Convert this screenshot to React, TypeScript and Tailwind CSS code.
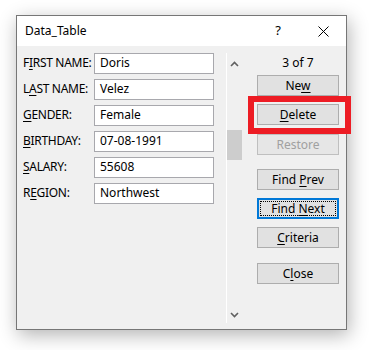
import React from 'react';

const font = { fontFamily: '"Noto Sans", "Liberation Sans", sans-serif' };

interface Field {
  pre: string;
  key: string;
  post: string;
  value: string;
}

const fields: Field[] = [
  { pre: 'F', key: 'I', post: 'RST NAME:', value: 'Doris' },
  { pre: 'L', key: 'A', post: 'ST NAME:', value: 'Velez' },
  { pre: '', key: 'G', post: 'ENDER:', value: 'Female' },
  { pre: '', key: 'B', post: 'IRTHDAY:', value: '07-08-1991' },
  { pre: '', key: 'S', post: 'ALARY:', value: '55608' },
  { pre: 'R', key: 'E', post: 'GION:', value: 'Northwest' },
];

const Btn: React.FC<{
  pre: string;
  k?: string;
  post?: string;
  className?: string;
  disabled?: boolean;
  focused?: boolean;
}> = ({ pre, k = '', post = '', className = '', disabled, focused }) => (
  <div
    className={`relative h-[21px] w-[82px] flex items-center justify-center text-[12px] ${
      focused
        ? 'border-2 border-[#0078d7] bg-[#e1e1e1]'
        : disabled
        ? 'border border-[#bfbfbf] bg-[#e6e6e6] text-[#a0a0a0]'
        : 'border border-[#adadad] bg-[#e1e1e1]'
    } ${className}`}
  >
    {focused && <div className="absolute inset-[1px] border border-dotted border-black" />}
    <span className="relative">
      {pre}
      <span className="underline underline-offset-2">{k}</span>
      {post}
    </span>
  </div>
);

const App: React.FC = () => {
  return (
    <div className="w-[369px] h-[350px] bg-white text-black" style={font}>
      <div className="pt-[15px] pl-[16px]">
        <div className="w-[331px] h-[315px] border border-[#767676] bg-[#f0f0f0] shadow-[2px_5px_18px_rgba(0,0,0,0.3)] flex flex-col">
          <div className="h-[30px] bg-white flex items-center text-[12px] shrink-0">
            <span className="ml-[8px]">Data_Table</span>
            <span className="ml-auto mr-[37px] text-[13px]">?</span>
            <svg width="11" height="11" viewBox="0 0 11 11" className="mr-[17px]">
              <path d="M0.5 0.5 L10.5 10.5 M10.5 0.5 L0.5 10.5" stroke="#000" strokeWidth="1" />
            </svg>
          </div>
          <div className="flex flex-1 pt-[7px]">
            <div className="pl-[6px] flex flex-col gap-[6px]">
              {fields.map((f) => (
                <div key={f.value} className="flex items-center h-[20px] text-[12px]">
                  <span className="w-[71px] whitespace-nowrap tracking-[-0.3px]">
                    {f.pre}
                    <span className="underline underline-offset-2">{f.key}</span>
                    {f.post}
                  </span>
                  <div className="w-[120px] h-[21px] border border-[#a8a8ad] bg-white flex items-center pl-[5px]">
                    {f.value}
                  </div>
                </div>
              ))}
            </div>
            <div className="ml-[12px] w-[16px] h-[270px] border-l border-white flex flex-col items-center">
              <div className="h-[17px] mt-[2px] flex items-center">
                <svg width="9" height="6" viewBox="0 0 9 6">
                  <path d="M1 5 L4.5 1.5 L8 5" stroke="#606060" strokeWidth="1.6" fill="none" />
                </svg>
              </div>
              <div className="mt-[58px] w-[15px] h-[30px] bg-[#cdcdcd]" />
              <div className="mt-auto h-[17px] flex items-center">
                <svg width="9" height="6" viewBox="0 0 9 6">
                  <path d="M1 1 L4.5 4.5 L8 1" stroke="#606060" strokeWidth="1.6" fill="none" />
                </svg>
              </div>
            </div>
            <div className="ml-[15px] flex flex-col text-[12px]">
              <div className="h-[20px] flex items-center justify-center">3 of 7</div>
              <Btn pre="Ne" k="w" className="mt-[2px]" />
              <div className="relative mt-[8px]">
                <Btn pre="" k="D" post="elete" />
                <div className="absolute left-[-9px] right-[-12px] top-[-8px] bottom-[-9px] border-[6px] border-[#ed1c24]" />
              </div>
              <Btn pre="Restore" disabled className="mt-[9px]" />
              <Btn pre="Find " k="P" post="rev" className="mt-[14px]" />
              <Btn pre="Find " k="N" post="ext" focused className="mt-[8px]" />
              <Btn pre="" k="C" post="riteria" className="mt-[8px]" />
              <Btn pre="C" k="l" post="ose" className="mt-[15px]" />
            </div>
          </div>
        </div>
      </div>
    </div>
  );
};

export default App;
